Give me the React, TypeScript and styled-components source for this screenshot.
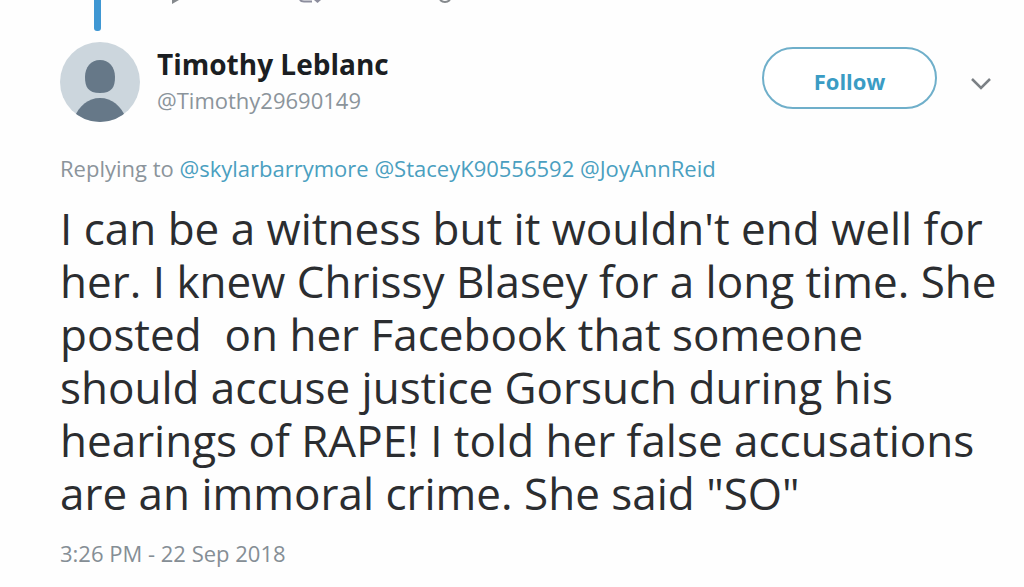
import React from "react";
import styled, { createGlobalStyle } from "styled-components";

const GlobalStyle = createGlobalStyle`
  * { box-sizing: border-box; }
  body {
    margin: 0;
    background: #fefefe;
    color: #2b2d30;
    font-family: "Open Sans", "Noto Sans", sans-serif;
  }
`;

const Page = styled.main`
  padding: 0 32px 16px 60px;
`;

const Thread = styled.div`
  display: flex;
  align-items: flex-start;
  height: 42px;
`;

const ThreadLine = styled.div`
  width: 7px;
  height: 31px;
  margin-left: 34px;
  border-radius: 0 0 3px 3px;
  background: #3f97d3;
`;

const ThreadActions = styled.div`
  display: flex;
  gap: 116px;
  margin-left: 70px;
`;

const Header = styled.header`
  display: flex;
  align-items: flex-start;
`;

const Avatar = styled.svg`
  flex: none;
  width: 80px;
  height: 80px;
`;

const Identity = styled.div`
  flex: 1;
  margin-left: 17px;
`;

const Name = styled.h1`
  margin: 0;
  color: #1b1e22;
  font-size: 28px;
  font-weight: 700;
  line-height: 44px;
`;

const Handle = styled.div`
  color: #8b949b;
  font-size: 22px;
  line-height: 28px;
`;

const FollowButton = styled.button`
  width: 175px;
  height: 62px;
  margin-top: 5px;
  padding: 6px 0 0;
  border: 2px solid #6fafca;
  border-radius: 31px;
  background: #fff;
  color: #3a9cc4;
  font: inherit;
  font-size: 22px;
  font-weight: 700;
`;

const MenuButton = styled.button`
  display: flex;
  margin: 34px 0 0 33px;
  padding: 0;
  border: 0;
  background: none;
  color: #7b8085;
`;

const Replying = styled.p`
  margin: 32px 0 0;
  color: #8b949b;
  font-size: 22px;
  line-height: 28px;
`;

const Mention = styled.a`
  color: #4a9fc0;
  text-decoration: none;
`;

const Message = styled.p`
  margin: 20px -16px 0 0;
  font-size: 44px;
  line-height: 53px;
  white-space: pre-wrap;
`;

const Time = styled.time`
  display: block;
  margin-top: 19px;
  color: #858e95;
  font-size: 22px;
  line-height: 28px;
`;

const mentions = ["@skylarbarrymore", "@StaceyK90556592", "@JoyAnnReid"];

const message = [
  "I can be a witness but it wouldn't end well for",
  "her. I knew Chrissy Blasey for a long time. She",
  "posted  on her Facebook that someone",
  "should accuse justice Gorsuch during his",
  "hearings of RAPE! I told her false accusations",
  'are an immoral crime. She said "SO"',
].join("\n");

export default function App() {
  return (
    <>
      <GlobalStyle />
      <Page>
        <Thread>
          <ThreadLine />
          <ThreadActions aria-hidden="true">
            <svg width="12" height="5" viewBox="0 0 12 5">
              <path d="M1 0V4L8 0Z" fill="#85898d" />
            </svg>
            <svg width="24" height="5" viewBox="0 0 24 5">
              <path d="M1 0Q2 1.5 5 1.5H13" fill="none" stroke="#8c8d9d" strokeWidth="2" />
              <path d="M15 0H22L18.5 3Z" fill="#8c8d9d" />
            </svg>
            <svg width="12" height="5" viewBox="0 0 12 5">
              <path d="M1 0Q6 4 11 0" fill="none" stroke="#85898d" strokeWidth="2" />
            </svg>
          </ThreadActions>
        </Thread>
        <Header>
          <Avatar viewBox="0 0 80 80" role="img" aria-label="Timothy Leblanc">
            <defs>
              <clipPath id="avatar-circle">
                <circle cx="40" cy="40" r="40" />
              </clipPath>
            </defs>
            <g clipPath="url(#avatar-circle)">
              <rect width="80" height="80" fill="#ccd6dd" />
              <path
                d="M40 18C49 18 55 25 55 35C55 45 52 51 40 51C28 51 25 45 25 35C25 25 31 18 40 18Z"
                fill="#667888"
              />
              <path d="M14 76C19 64 28 56 40 56C52 56 61 64 66 76V80H14Z" fill="#667888" />
            </g>
          </Avatar>
          <Identity>
            <Name>Timothy Leblanc</Name>
            <Handle>@Timothy29690149</Handle>
          </Identity>
          <FollowButton type="button">Follow</FollowButton>
          <MenuButton type="button" aria-label="More">
            <svg width="22" height="15" viewBox="0 0 22 15" fill="none" stroke="currentColor" strokeWidth="2.5">
              <path d="M2 3L11 12L20 3" />
            </svg>
          </MenuButton>
        </Header>
        <Replying>
          Replying to{" "}
          {mentions.map((name) => (
            <React.Fragment key={name}>
              <Mention href="#">{name}</Mention>{" "}
            </React.Fragment>
          ))}
        </Replying>
        <Message>{message}</Message>
        <Time dateTime="2018-09-22T15:26">3:26 PM - 22 Sep 2018</Time>
      </Page>
    </>
  );
}
